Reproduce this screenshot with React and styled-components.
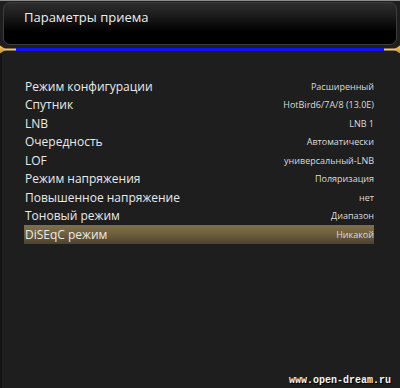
import React from "react"
import styled, { createGlobalStyle } from "styled-components"

const GlobalStyle = createGlobalStyle`
  html, body {
    margin: 0;
    padding: 0;
    background: #000;
  }
`

const Screen = styled.div`
  position: relative;
  width: 400px;
  height: 388px;
  box-sizing: border-box;
  border-top: 1px solid #8c8c8c;
  background: #1e1e1e;
  display: flex;
  flex-direction: column;
  overflow: hidden;
  font-family: "Open Sans", "DejaVu Sans", sans-serif;
`

const Header = styled.div`
  height: 43px;
  margin: 1px 3px 0;
  box-sizing: border-box;
  border: 1px solid #3c3c3c;
  border-radius: 7px;
  background: linear-gradient(to bottom, #2e2e2e 0%, #121212 45%, #000 70%, #000 100%);
  padding: 5px 0 0 20px;
`

const Title = styled.h1`
  margin: 0;
  font-size: 13px;
  font-weight: 400;
  color: #eeeeee;
`

const Divider = styled.div`
  display: flex;
  align-items: center;
  height: 9px;
  background: #1e1e1e;
`

const BlueLine = styled.div`
  flex: 1;
  height: 5px;
  background: linear-gradient(to bottom, #0a0a70 0%, #1010f0 30%, #1010f0 70%, #0a0a70 100%);
`

const Body = styled.div`
  flex: 1;
  padding: 23px 26px 0 22px;
  border-left: 2px solid #141414;
`

const Row = styled.div`
  display: flex;
  align-items: center;
  justify-content: space-between;
  height: 18.5px;
  padding: 0 0 0 1px;
  background: ${p =>
    p.$active
      ? "linear-gradient(to bottom, #807049 0%, #6f603f 45%, #4c422f 100%)"
      : "transparent"};
`

const Label = styled.span`
  font-size: 12px;
  color: #eaeaea;
  white-space: nowrap;
`

const Value = styled.span`
  font-size: 9px;
  color: #dcdcdc;
  white-space: nowrap;
`

const Watermark = styled.div`
  position: absolute;
  right: 9px;
  bottom: 2px;
  font-family: "Liberation Mono", "DejaVu Sans Mono", monospace;
  font-weight: 700;
  font-size: 10px;
  color: #f4f4f4;
  text-shadow: 1px 1px 0 #000;
`

const Arrow = ({ flip }) => (
  <svg
    width="16"
    height="9"
    viewBox="0 0 16 9"
    style={flip ? { transform: "scaleX(-1)" } : undefined}
  >
    <defs>
      <linearGradient id="gold" x1="0" y1="0" x2="0" y2="1">
        <stop offset="0" stopColor="#f7c768" />
        <stop offset="1" stopColor="#c98a2a" />
      </linearGradient>
    </defs>
    <path d="M0 0.5 L6 4.5 L0 8.5 Z" fill="url(#gold)" />
    <rect x="4" y="3.5" width="12" height="2" fill="#f2c878" />
  </svg>
)

const rows = [
  ["Режим конфигурации", "Расширенный"],
  ["Спутник", "HotBird6/7A/8 (13.0E)"],
  ["LNB", "LNB 1"],
  ["Очередность", "Автоматически"],
  ["LOF", "универсальный-LNB"],
  ["Режим напряжения", "Поляризация"],
  ["Повышенное напряжение", "нет"],
  ["Тоновый режим", "Диапазон"],
  ["DiSEqC режим", "Никакой"],
]

export default function App() {
  return (
    <Screen>
      <GlobalStyle />
      <Header>
        <Title>Параметры приема</Title>
      </Header>
      <Divider>
        <Arrow />
        <BlueLine />
        <Arrow flip />
      </Divider>
      <Body>
        {rows.map(([label, value], index) => (
          <Row key={label} $active={index === rows.length - 1}>
            <Label>{label}</Label>
            <Value>{value}</Value>
          </Row>
        ))}
      </Body>
      <Watermark>www.open-dream.ru</Watermark>
    </Screen>
  )
}
